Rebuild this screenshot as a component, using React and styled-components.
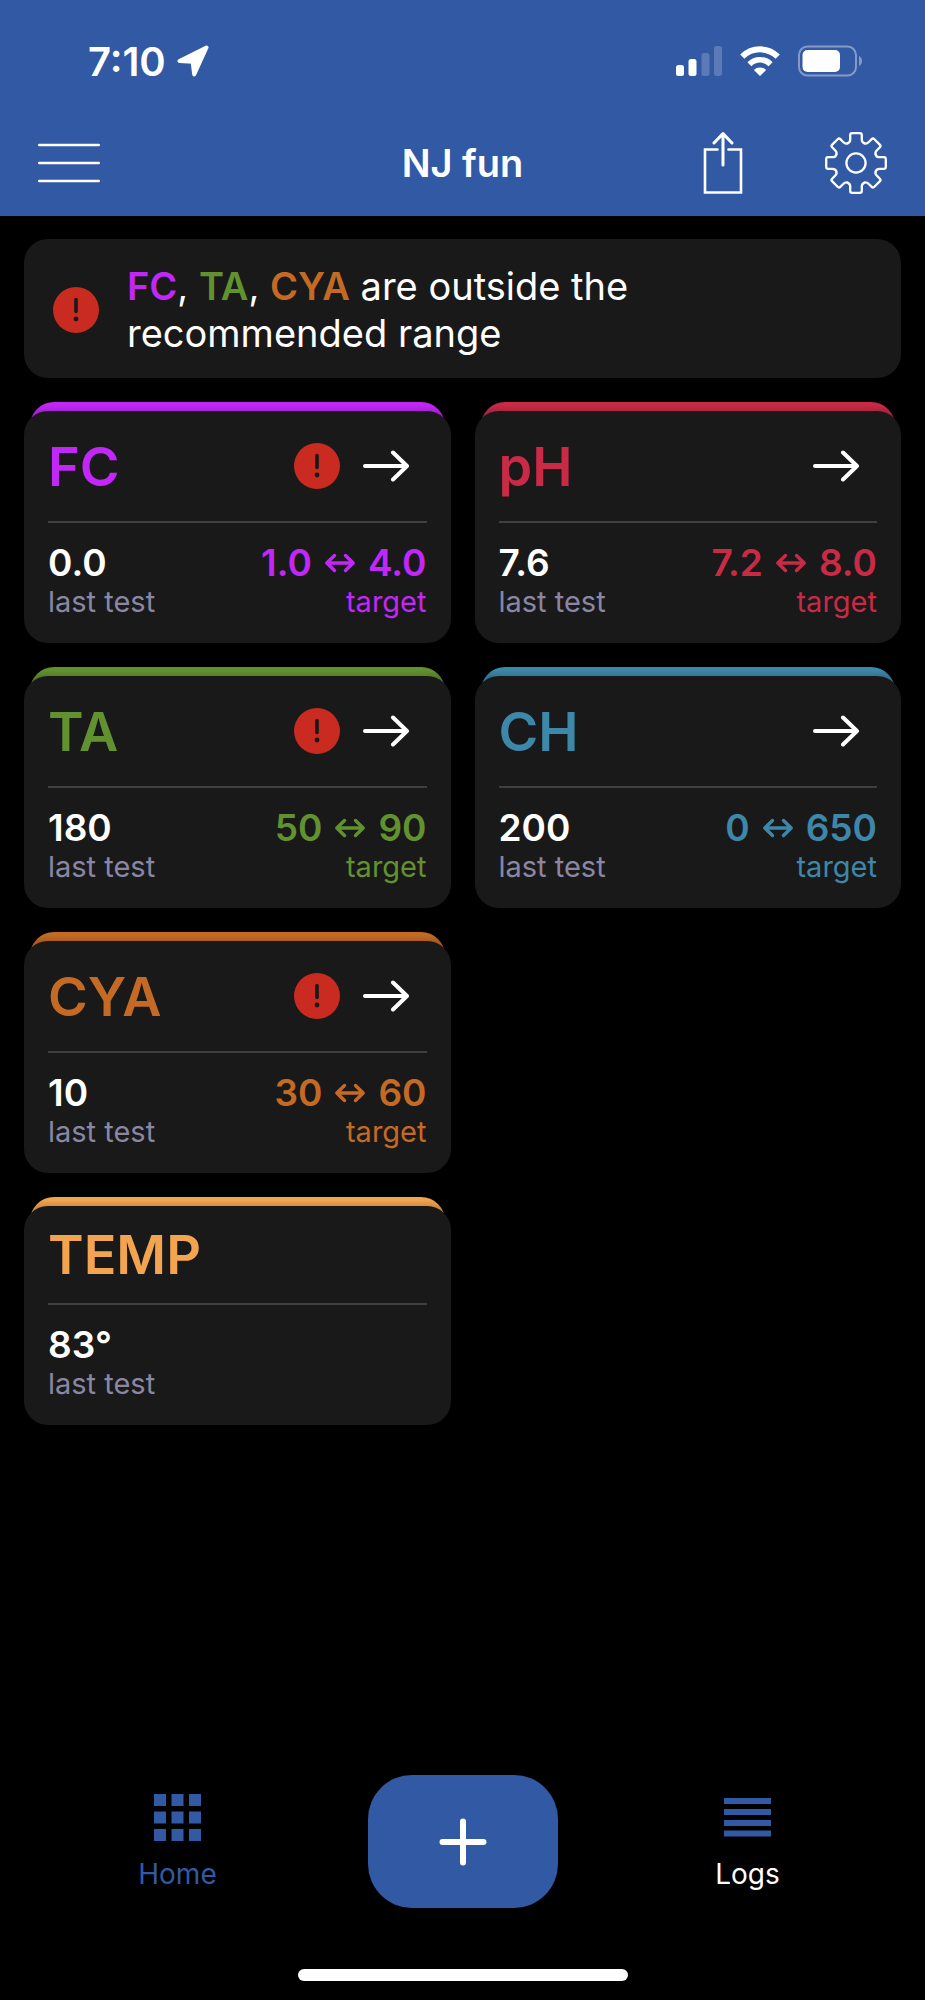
import React from 'react';
import styled, { createGlobalStyle } from 'styled-components';

const colors = {
  brand: '#3259a4',
  panel: '#191919',
  line: '#404040',
  muted: '#8a86a3',
  alert: '#c92b20',
  fc: '#c127f6',
  ph: '#c92a46',
  ta: '#62922f',
  ch: '#3d87a9',
  cya: '#c56a25',
  temp: '#f3a450'
};

const GlobalStyle = createGlobalStyle`
  * {
    box-sizing: border-box;
  }

  body {
    margin: 0;
    background: #000;
    color: #fff;
    font-family: Inter, 'Liberation Sans', sans-serif;
  }

  svg {
    display: block;
  }
`;

const Page = styled.div`
  display: flex;
  flex-direction: column;
  min-height: 100vh;
`;

const Header = styled.header`
  background: ${colors.brand};
`;

const StatusBar = styled.div`
  display: flex;
  align-items: center;
  justify-content: space-between;
  height: 110px;
  padding: 12px 62px 0 88px;
`;

const StatusGroup = styled.div`
  display: flex;
  align-items: center;
  gap: ${props => props.$gap}px;
`;

const Clock = styled.span`
  font-size: 40px;
  font-weight: 600;
`;

const Toolbar = styled.div`
  display: grid;
  grid-template-columns: 1fr auto 1fr;
  align-items: center;
  height: 106px;
  padding: 0 38px;
`;

const ToolbarTitle = styled.h1`
  margin: 0;
  font-size: 38px;
  font-weight: 600;
`;

const ToolbarActions = styled.div`
  display: flex;
  justify-content: flex-end;
  gap: 82px;
`;

const IconButton = styled.button`
  justify-self: start;
  padding: 0;
  border: 0;
  background: none;
  color: inherit;
  cursor: pointer;
`;

const Main = styled.main`
  display: flex;
  flex: 1;
  flex-direction: column;
  gap: 24px;
  padding: 23px 24px;
`;

const Notice = styled.section`
  display: flex;
  align-items: center;
  gap: 28px;
  padding: 24px 29px 21px;
  border-radius: 24px;
  background: ${colors.panel};
`;

const NoticeText = styled.p`
  flex: 1;
  max-width: 560px;
  margin: 0;
  font-size: 38px;
  line-height: 47px;
`;

const Code = styled.span`
  color: ${props => props.$color};
  font-weight: 600;
`;

const Cards = styled.div`
  display: grid;
  grid-template-columns: 1fr 1fr;
  align-items: start;
  gap: 24px;
`;

const Card = styled.article`
  grid-column: ${props => (props.$fullRow ? '1' : 'auto')};
  color: ${props => props.$color};

  /* coloured lip that peeks out above the panel */
  &::before {
    content: '';
    display: block;
    height: 24px;
    margin: 0 6px -15px;
    border-radius: 24px 24px 0 0;
    background: linear-gradient(rgba(0, 0, 0, 0) 3px, rgba(0, 0, 0, 0.15) 10px)
      ${props => props.$color};
  }
`;

const CardBody = styled.div`
  position: relative;
  padding: 0 24px 26px;
  border-radius: 24px;
  background: ${colors.panel};
`;

const CardHead = styled.div`
  display: flex;
  align-items: center;
  gap: 23px;
  height: ${props => (props.$compact ? 99 : 112)}px;
  padding-right: 18px;
  border-bottom: 2px solid ${colors.line};
`;

const CardTitle = styled.h2`
  flex: 1;
  margin: 0;
  font-size: 54px;
  font-weight: 600;
`;

const Readings = styled.div`
  display: flex;
  justify-content: space-between;
  padding-top: 16px;
`;

const Reading = styled.div`
  display: flex;
  flex-direction: column;
  align-items: ${props => (props.$end ? 'flex-end' : 'flex-start')};
`;

const Value = styled.div`
  display: flex;
  align-items: center;
  gap: 12px;
  color: ${props => (props.$plain ? '#fff' : 'inherit')};
  font-size: 37px;
  font-weight: 600;
  line-height: 48px;
`;

const Label = styled.div`
  color: ${props => (props.$muted ? colors.muted : 'inherit')};
  font-size: 29px;
  line-height: 30px;
`;

const Footer = styled.footer`
  display: flex;
  flex-direction: column;
  align-items: center;
`;

const TabBar = styled.nav`
  display: grid;
  grid-template-columns: 1fr 1fr 1fr;
  align-items: center;
  justify-items: center;
  width: 100%;
  padding: 0 35px;
`;

const Tab = styled.a`
  display: flex;
  flex-direction: column;
  align-items: center;
  gap: 17px;
  color: ${props => (props.$active ? colors.brand : '#fff')};
  font-size: 28px;
  line-height: 32px;
  text-decoration: none;
`;

const AddButton = styled.button`
  display: flex;
  align-items: center;
  justify-content: center;
  width: 190px;
  height: 133px;
  padding: 0;
  border: 0;
  border-radius: 44px;
  background: ${colors.brand};
  color: #fff;
  cursor: pointer;
`;

const HomeIndicator = styled.div`
  width: 330px;
  height: 12px;
  margin: 61px 0 19px;
  border-radius: 6px;
  background: #fff;
`;

const LocationIcon = () => (
  <svg width="32" height="32" viewBox="0 0 32 32" fill="#fff" stroke="#fff" strokeWidth="4" strokeLinejoin="round">
    <path d="M29.500 2.500 2.500 16 15.600 16.800 17.200 29.500Z" />
  </svg>
);

const SignalIcon = () => (
  <svg width="46" height="30" viewBox="0 0 46 30" fill="#fff">
    <rect x="0" y="19" width="8" height="11" rx="2.5" />
    <rect x="12.5" y="13" width="8" height="17" rx="2.5" />
    <rect x="25.5" y="7" width="8" height="23" rx="2.5" opacity=".2" />
    <rect x="38" y="0" width="8" height="30" rx="2.5" opacity=".2" />
  </svg>
);

const WifiIcon = () => (
  <svg width="40" height="30" viewBox="0 0 40 30" fill="none" stroke="#fff">
    <path d="M2.3 10.7a25 25 0 0 1 35.4 0" strokeWidth="6" />
    <path d="M9.4 18.2a15 15 0 0 1 21.2 0" strokeWidth="5.6" />
    <path d="M13.8 24a9 9 0 0 1 12.4 0L20 30Z" fill="#fff" stroke="none" />
  </svg>
);

const BatteryIcon = () => (
  <svg width="65" height="32" viewBox="0 0 65 32">
    <rect x="1" y="1.5" width="57" height="29" rx="8.5" fill="none" stroke="#fff" strokeWidth="2" opacity=".4" />
    <rect x="4.5" y="5" width="37.5" height="22" rx="5" fill="#fff" />
    <path d="M61 11c4 1.5 4 8.5 0 10Z" fill="#fff" opacity=".4" />
  </svg>
);

const MenuIcon = () => (
  <svg width="62" height="40" viewBox="0 0 62 40" stroke="#fff" strokeWidth="2.6" strokeLinecap="round">
    <path d="M1.3 2H60.7M1.3 20H60.7M1.3 38H60.7" />
  </svg>
);

const ShareIcon = () => (
  <svg width="40" height="62" viewBox="0 0 40 62" fill="none" stroke="#fff" strokeWidth="2.6">
    <path d="M14.5 17.5H2V60.5H38V17.5H25.5" strokeLinecap="round" />
    <path d="M20 33V2M11 11 20 1.6 29 11" strokeWidth="3" strokeLinecap="round" strokeLinejoin="round" />
  </svg>
);

const GearIcon = () => (
  <svg width="62" height="62" viewBox="-31 -31 62 62" fill="none" stroke="#fff" strokeWidth="2.3" strokeLinecap="round">
    <circle r="9.6" />
    {[0, 45, 90, 135, 180, 225, 270, 315].map(angle => (
      <path
        key={angle}
        transform={`rotate(${angle})`}
        d="M-8.2-19.8Q-5.8-20.6-5.8-23.5V-28Q-5.8-29.8-3.8-29.8H3.8Q5.8-29.8 5.8-28V-23.5Q5.8-20.6 8.2-19.8"
      />
    ))}
  </svg>
);

const WarningIcon = () => (
  <svg width="46" height="46" viewBox="0 0 46 46" role="img" aria-label="Out of range">
    <circle cx="23" cy="23" r="23" fill={colors.alert} />
    <path d="M23 12.5V24.5" stroke={colors.panel} strokeWidth="3.6" strokeLinecap="round" />
    <circle cx="23" cy="32" r="2.4" fill={colors.panel} />
  </svg>
);

const ArrowIcon = () => (
  <svg width="46" height="32" viewBox="0 0 46 32" fill="none" stroke="#fff" strokeWidth="4" strokeLinecap="round" strokeLinejoin="round">
    <path d="M2 16H44M30 2.5 44 16 30 29.5" />
  </svg>
);

const RangeIcon = () => (
  <svg width="32" height="20" viewBox="0 0 32 20" fill="none" stroke="currentColor" strokeWidth="3.4" strokeLinecap="round" strokeLinejoin="round">
    <path d="M3 10H29M10.5 2.5 2.8 10 10.5 17.5M21.5 2.5 29.2 10 21.5 17.5" />
  </svg>
);

const PlusIcon = () => (
  <svg width="48" height="48" viewBox="0 0 48 48" stroke="currentColor" strokeWidth="6" strokeLinecap="round">
    <path d="M24 3.5V44.5M3.5 24H44.5" />
  </svg>
);

const GridIcon = () => (
  <svg width="47" height="47" viewBox="0 0 47 47" fill={colors.brand}>
    {[0, 17.5, 35].map(y =>
      [0, 17.5, 35].map(x => <rect key={`${x}-${y}`} x={x} y={y} width="12" height="12" />)
    )}
  </svg>
);

const ListIcon = () => (
  <svg width="47" height="47" viewBox="0 0 47 47" fill={colors.brand}>
    {[4, 15, 26, 36.5].map(y => (
      <rect key={y} y={y} width="47" height="6" />
    ))}
  </svg>
);

const tests = [
  { code: 'FC', color: colors.fc, last: '0.0', target: ['1.0', '4.0'], warning: true },
  { code: 'pH', color: colors.ph, last: '7.6', target: ['7.2', '8.0'] },
  { code: 'TA', color: colors.ta, last: '180', target: ['50', '90'], warning: true },
  { code: 'CH', color: colors.ch, last: '200', target: ['0', '650'] },
  { code: 'CYA', color: colors.cya, last: '10', target: ['30', '60'], warning: true },
  { code: 'TEMP', color: colors.temp, last: '83°', fullRow: true }
];

const TestCard = ({ code, color, last, target, warning, fullRow }) => (
  <Card $color={color} $fullRow={fullRow}>
    <CardBody>
      <CardHead $compact={!target}>
        <CardTitle>{code}</CardTitle>
        {warning && <WarningIcon />}
        {target && (
          <IconButton type="button" aria-label={`Open ${code}`}>
            <ArrowIcon />
          </IconButton>
        )}
      </CardHead>
      <Readings>
        <Reading>
          <Value $plain>{last}</Value>
          <Label $muted>last test</Label>
        </Reading>
        {target && (
          <Reading $end>
            <Value>
              <span>{target[0]}</span>
              <RangeIcon />
              <span>{target[1]}</span>
            </Value>
            <Label>target</Label>
          </Reading>
        )}
      </Readings>
    </CardBody>
  </Card>
);

const App = () => {
  const outside = tests.filter(test => test.warning);

  return (
    <Page>
      <GlobalStyle />
      <Header>
        <StatusBar>
          <StatusGroup $gap={11}>
            <Clock>7:10</Clock>
            <LocationIcon />
          </StatusGroup>
          <StatusGroup $gap={18}>
            <SignalIcon />
            <WifiIcon />
            <BatteryIcon />
          </StatusGroup>
        </StatusBar>
        <Toolbar>
          <IconButton type="button" aria-label="Menu">
            <MenuIcon />
          </IconButton>
          <ToolbarTitle>NJ fun</ToolbarTitle>
          <ToolbarActions>
            <IconButton type="button" aria-label="Share">
              <ShareIcon />
            </IconButton>
            <IconButton type="button" aria-label="Settings">
              <GearIcon />
            </IconButton>
          </ToolbarActions>
        </Toolbar>
      </Header>

      <Main>
        <Notice>
          <WarningIcon />
          <NoticeText>
            {outside.map((test, i) => (
              <React.Fragment key={test.code}>
                {i > 0 && ', '}
                <Code $color={test.color}>{test.code}</Code>
              </React.Fragment>
            ))}{' '}
            are outside the recommended range
          </NoticeText>
        </Notice>
        <Cards>
          {tests.map(test => (
            <TestCard key={test.code} {...test} />
          ))}
        </Cards>
      </Main>

      <Footer>
        <TabBar>
          <Tab href="#home" $active>
            <GridIcon />
            Home
          </Tab>
          <AddButton type="button" aria-label="Add test">
            <PlusIcon />
          </AddButton>
          <Tab href="#logs">
            <ListIcon />
            Logs
          </Tab>
        </TabBar>
        <HomeIndicator />
      </Footer>
    </Page>
  );
};

export default App;
